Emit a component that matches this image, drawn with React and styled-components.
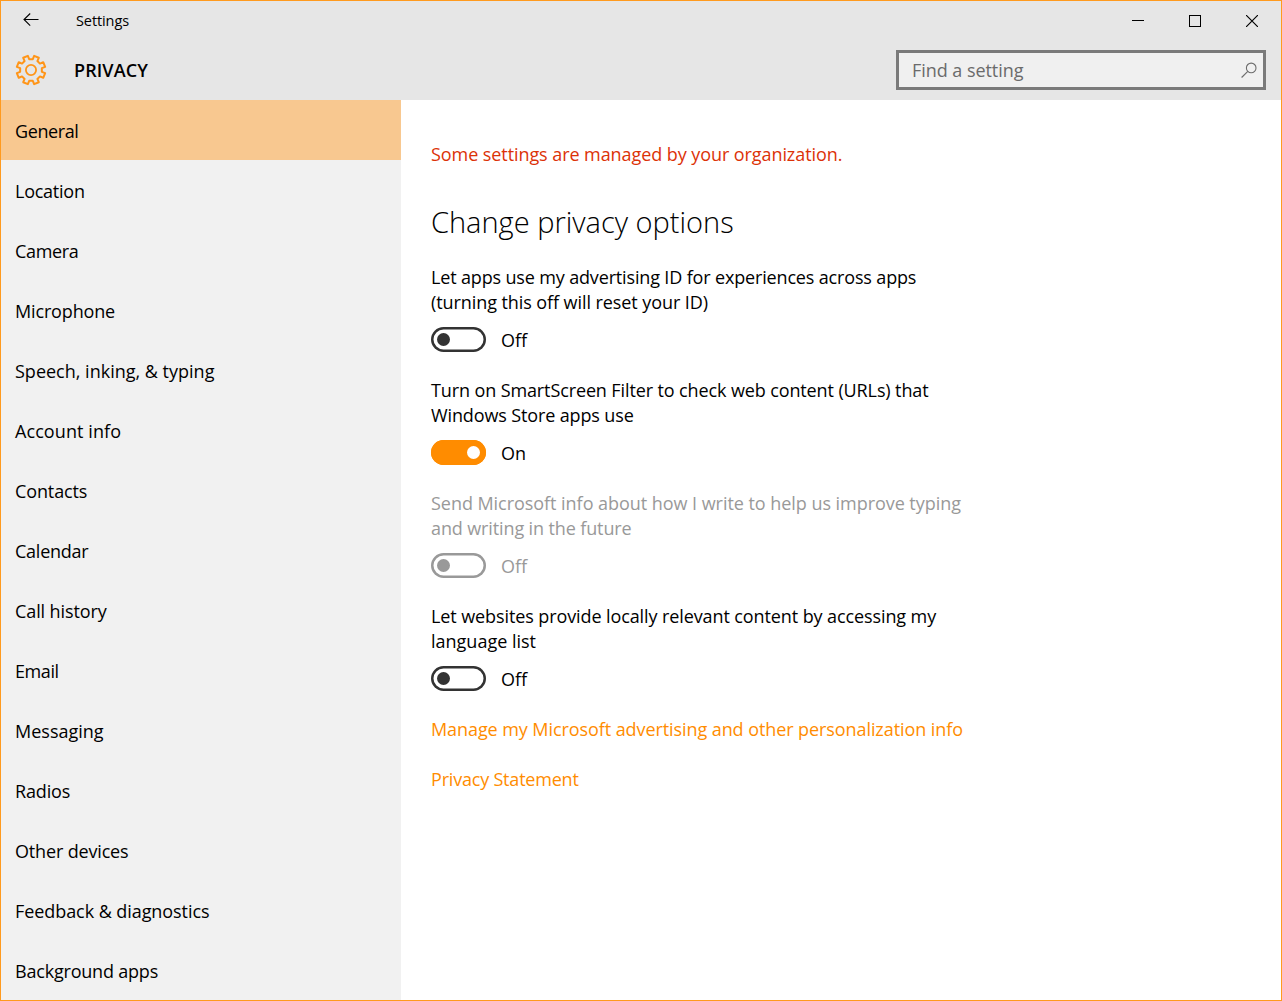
import React from 'react';
import styled, { createGlobalStyle } from 'styled-components';

const navItems = [
  { label: 'General', track: -0.4 },
  { label: 'Location', track: -0.25 },
  { label: 'Camera', track: -0.35 },
  { label: 'Microphone', track: -0.15 },
  { label: 'Speech, inking, & typing', track: 0 },
  { label: 'Account info', track: 0.08 },
  { label: 'Contacts', track: -0.12 },
  { label: 'Calendar', track: -0.25 },
  { label: 'Call history', track: -0.1 },
  { label: 'Email', track: -0.4 },
  { label: 'Messaging', track: 0 },
  { label: 'Radios', track: -0.16 },
  { label: 'Other devices', track: -0.16 },
  { label: 'Feedback & diagnostics', track: -0.07 },
  { label: 'Background apps', track: -0.2 },
];

const options = [
  {
    lines: [
      { text: 'Let apps use my advertising ID for experiences across apps', track: -0.155 },
      { text: '(turning this off will reset your ID)', track: -0.08 },
    ],
  },
  {
    on: true,
    lines: [
      { text: 'Turn on SmartScreen Filter to check web content (URLs) that', track: -0.115 },
      { text: 'Windows Store apps use', track: -0.13 },
    ],
  },
  {
    disabled: true,
    lines: [
      { text: 'Send Microsoft info about how I write to help us improve typing', track: -0.045 },
      { text: 'and writing in the future', track: -0.12 },
    ],
  },
  {
    lines: [
      { text: 'Let websites provide locally relevant content by accessing my', track: -0.1 },
      { text: 'language list', track: 0 },
    ],
  },
];

// eight teeth, with a gap between two of them at the top
const gearPoints = () => {
  const points = [];
  const add = (deg, r) => {
    const a = (deg * Math.PI) / 180;
    points.push(`${(16 + r * Math.sin(a)).toFixed(2)},${(16 - r * Math.cos(a)).toFixed(2)}`);
  };
  for (let i = 0; i < 8; i++) {
    const mid = 22.5 + i * 45;
    add(mid - 13, 11);
    add(mid - 10, 14.5);
    add(mid + 10, 14.5);
    add(mid + 13, 11);
  }
  return points.join(' ');
};

const GearIcon = () => (
  <svg width="32" height="32" viewBox="0 0 32 32" fill="none" stroke="#ff9518" strokeWidth="2">
    <polygon points={gearPoints()} strokeLinejoin="round" />
    <circle cx="16" cy="16" r="5.1" strokeWidth="1.8" />
  </svg>
);

const BackIcon = () => (
  <svg width="16" height="14" viewBox="0 0 16 14" fill="none" stroke="#000" strokeWidth="1.1">
    <path d="M15.5 6.5H1M7.2 0.5L1 6.5L7.2 12.7" />
  </svg>
);

const SearchIcon = () => (
  <svg width="16" height="16" viewBox="0 0 16 16" fill="none" stroke="#6c6c6c" strokeWidth="1.1">
    <circle cx="10.2" cy="5.9" r="4.8" />
    <path d="M6.8 9.3L0.6 15.5" />
  </svg>
);

const App = () => {
  return (
    <>
      <GlobalStyle />
      <Window>
        <Header>
          <TitleBar>
            <BackButton>
              <BackIcon />
            </BackButton>
            <WindowTitle>Settings</WindowTitle>
            <Controls>
              <svg width="12" height="12" viewBox="0 0 12 12" stroke="#000" fill="none">
                <path d="M0 5.5H12" />
              </svg>
              <svg width="12" height="12" viewBox="0 0 12 12" stroke="#000" fill="none">
                <rect x="0.5" y="0.5" width="11" height="11" />
              </svg>
              <svg width="12" height="12" viewBox="0 0 12 12" stroke="#000" fill="none" strokeWidth="1.15">
                <path d="M0 0L12 12M12 0L0 12" />
              </svg>
            </Controls>
          </TitleBar>
          <Toolbar>
            <GearIcon />
            <PageTitle>PRIVACY</PageTitle>
            <SearchBox>
              <span>Find a setting</span>
              <SearchIcon />
            </SearchBox>
          </Toolbar>
        </Header>
        <Body>
          <Sidebar>
            {navItems.map((item, i) => (
              <NavItem key={item.label} $active={i === 0}>
                <Text $track={item.track}>{item.label}</Text>
              </NavItem>
            ))}
          </Sidebar>
          <Content>
            <Notice>
              <Text $track={-0.075}>Some settings are managed by your organization.</Text>
            </Notice>
            <Heading>Change privacy options</Heading>
            {options.map((option) => (
              <Option key={option.lines[0].text} $disabled={option.disabled}>
                {option.lines.map((line) => (
                  <Line key={line.text}>
                    <Text $track={line.track}>{line.text}</Text>
                  </Line>
                ))}
                <ToggleRow>
                  <Toggle $on={option.on} $disabled={option.disabled}>
                    <Knob $on={option.on} $disabled={option.disabled} />
                  </Toggle>
                  <ToggleLabel>{option.on ? 'On' : 'Off'}</ToggleLabel>
                </ToggleRow>
              </Option>
            ))}
            <Link>
              <Text $track={-0.08}>Manage my Microsoft advertising and other personalization info</Text>
            </Link>
            <Link>
              <Text $track={-0.2}>Privacy Statement</Text>
            </Link>
          </Content>
        </Body>
      </Window>
    </>
  );
};

const GlobalStyle = createGlobalStyle`
  * {
    box-sizing: border-box;
  }
  body {
    margin: 0;
    font-family: 'Open Sans', 'Noto Sans', sans-serif;
    font-size: 18px;
    color: #000;
  }
  svg {
    display: block;
    flex-shrink: 0;
  }
`;

const Window = styled.div`
  display: flex;
  flex-direction: column;
  width: 1282px;
  height: 1001px;
  border: 1px solid #ff9a1e;
  background: #fff;
  overflow: hidden;
`;

const Header = styled.header`
  height: 99px;
  background: #e6e6e6;
`;

const TitleBar = styled.div`
  display: flex;
  align-items: center;
  height: 39px;
  padding-right: 23px;
`;

const BackButton = styled.div`
  width: 75px;
  padding: 0 0 1px 22px;
`;

const WindowTitle = styled.div`
  font-size: 14.5px;
  letter-spacing: -0.1px;
  line-height: 20px;
`;

const Controls = styled.div`
  display: flex;
  gap: 45px;
  margin-left: auto;
`;

const Toolbar = styled.div`
  display: flex;
  align-items: center;
  height: 60px;
  padding: 0 15px 0 14px;
`;

const PageTitle = styled.h1`
  margin: 0 0 0 27px;
  font-size: 18px;
  font-weight: 600;
  letter-spacing: 0.1px;
  line-height: 24px;
`;

const SearchBox = styled.div`
  display: flex;
  align-items: center;
  justify-content: space-between;
  width: 370px;
  height: 40px;
  margin-left: auto;
  padding: 0 6px 0 13px;
  border: 3px solid #7a7a7a;
  background: #f0f0f0;
  color: #6b6b6b;
  letter-spacing: -0.05px;
`;

const Body = styled.div`
  display: flex;
  flex: 1;
  min-height: 0;
`;

const Sidebar = styled.nav`
  width: 400px;
  background: #f1f1f1;
`;

const NavItem = styled.div`
  display: flex;
  align-items: center;
  height: 60px;
  padding: 2px 14px 0;
  background: ${(props) => (props.$active ? '#f8c890' : 'transparent')};
`;

const Text = styled.span`
  letter-spacing: ${(props) => props.$track}px;
  white-space: nowrap;
`;

const Content = styled.main`
  flex: 1;
  padding: 42px 30px 0;
  line-height: 25px;
`;

const Notice = styled.div`
  color: #dc3207;
`;

const Heading = styled.h2`
  margin: 35px 0 23px;
  font-size: 29px;
  font-weight: 300;
  line-height: 40px;
`;

const Option = styled.div`
  height: 113px;
  color: ${(props) => (props.$disabled ? '#999' : '#000')};
`;

const Line = styled.div`
  height: 25px;
`;

const ToggleRow = styled.div`
  display: flex;
  align-items: center;
  height: 25px;
  margin-top: 12px;
`;

const Toggle = styled.div`
  display: flex;
  align-items: center;
  justify-content: ${(props) => (props.$on ? 'flex-end' : 'flex-start')};
  width: 55px;
  height: 25px;
  padding: 0 6px;
  border-radius: 13px;
  box-shadow: inset 0 0 0 2.5px ${(props) => (props.$on ? '#ff8c00' : props.$disabled ? '#999' : '#333')};
  background: ${(props) => (props.$on ? '#ff8c00' : '#fff')};
`;

const Knob = styled.div`
  width: 13px;
  height: 13px;
  border-radius: 50%;
  background: ${(props) => (props.$on ? '#fff' : props.$disabled ? '#999' : '#333')};
`;

const ToggleLabel = styled.div`
  margin-left: 15px;
  padding-top: 2px;
`;

const Link = styled.div`
  margin-bottom: 25px;
  color: #ff8c00;
`;

export default App;
